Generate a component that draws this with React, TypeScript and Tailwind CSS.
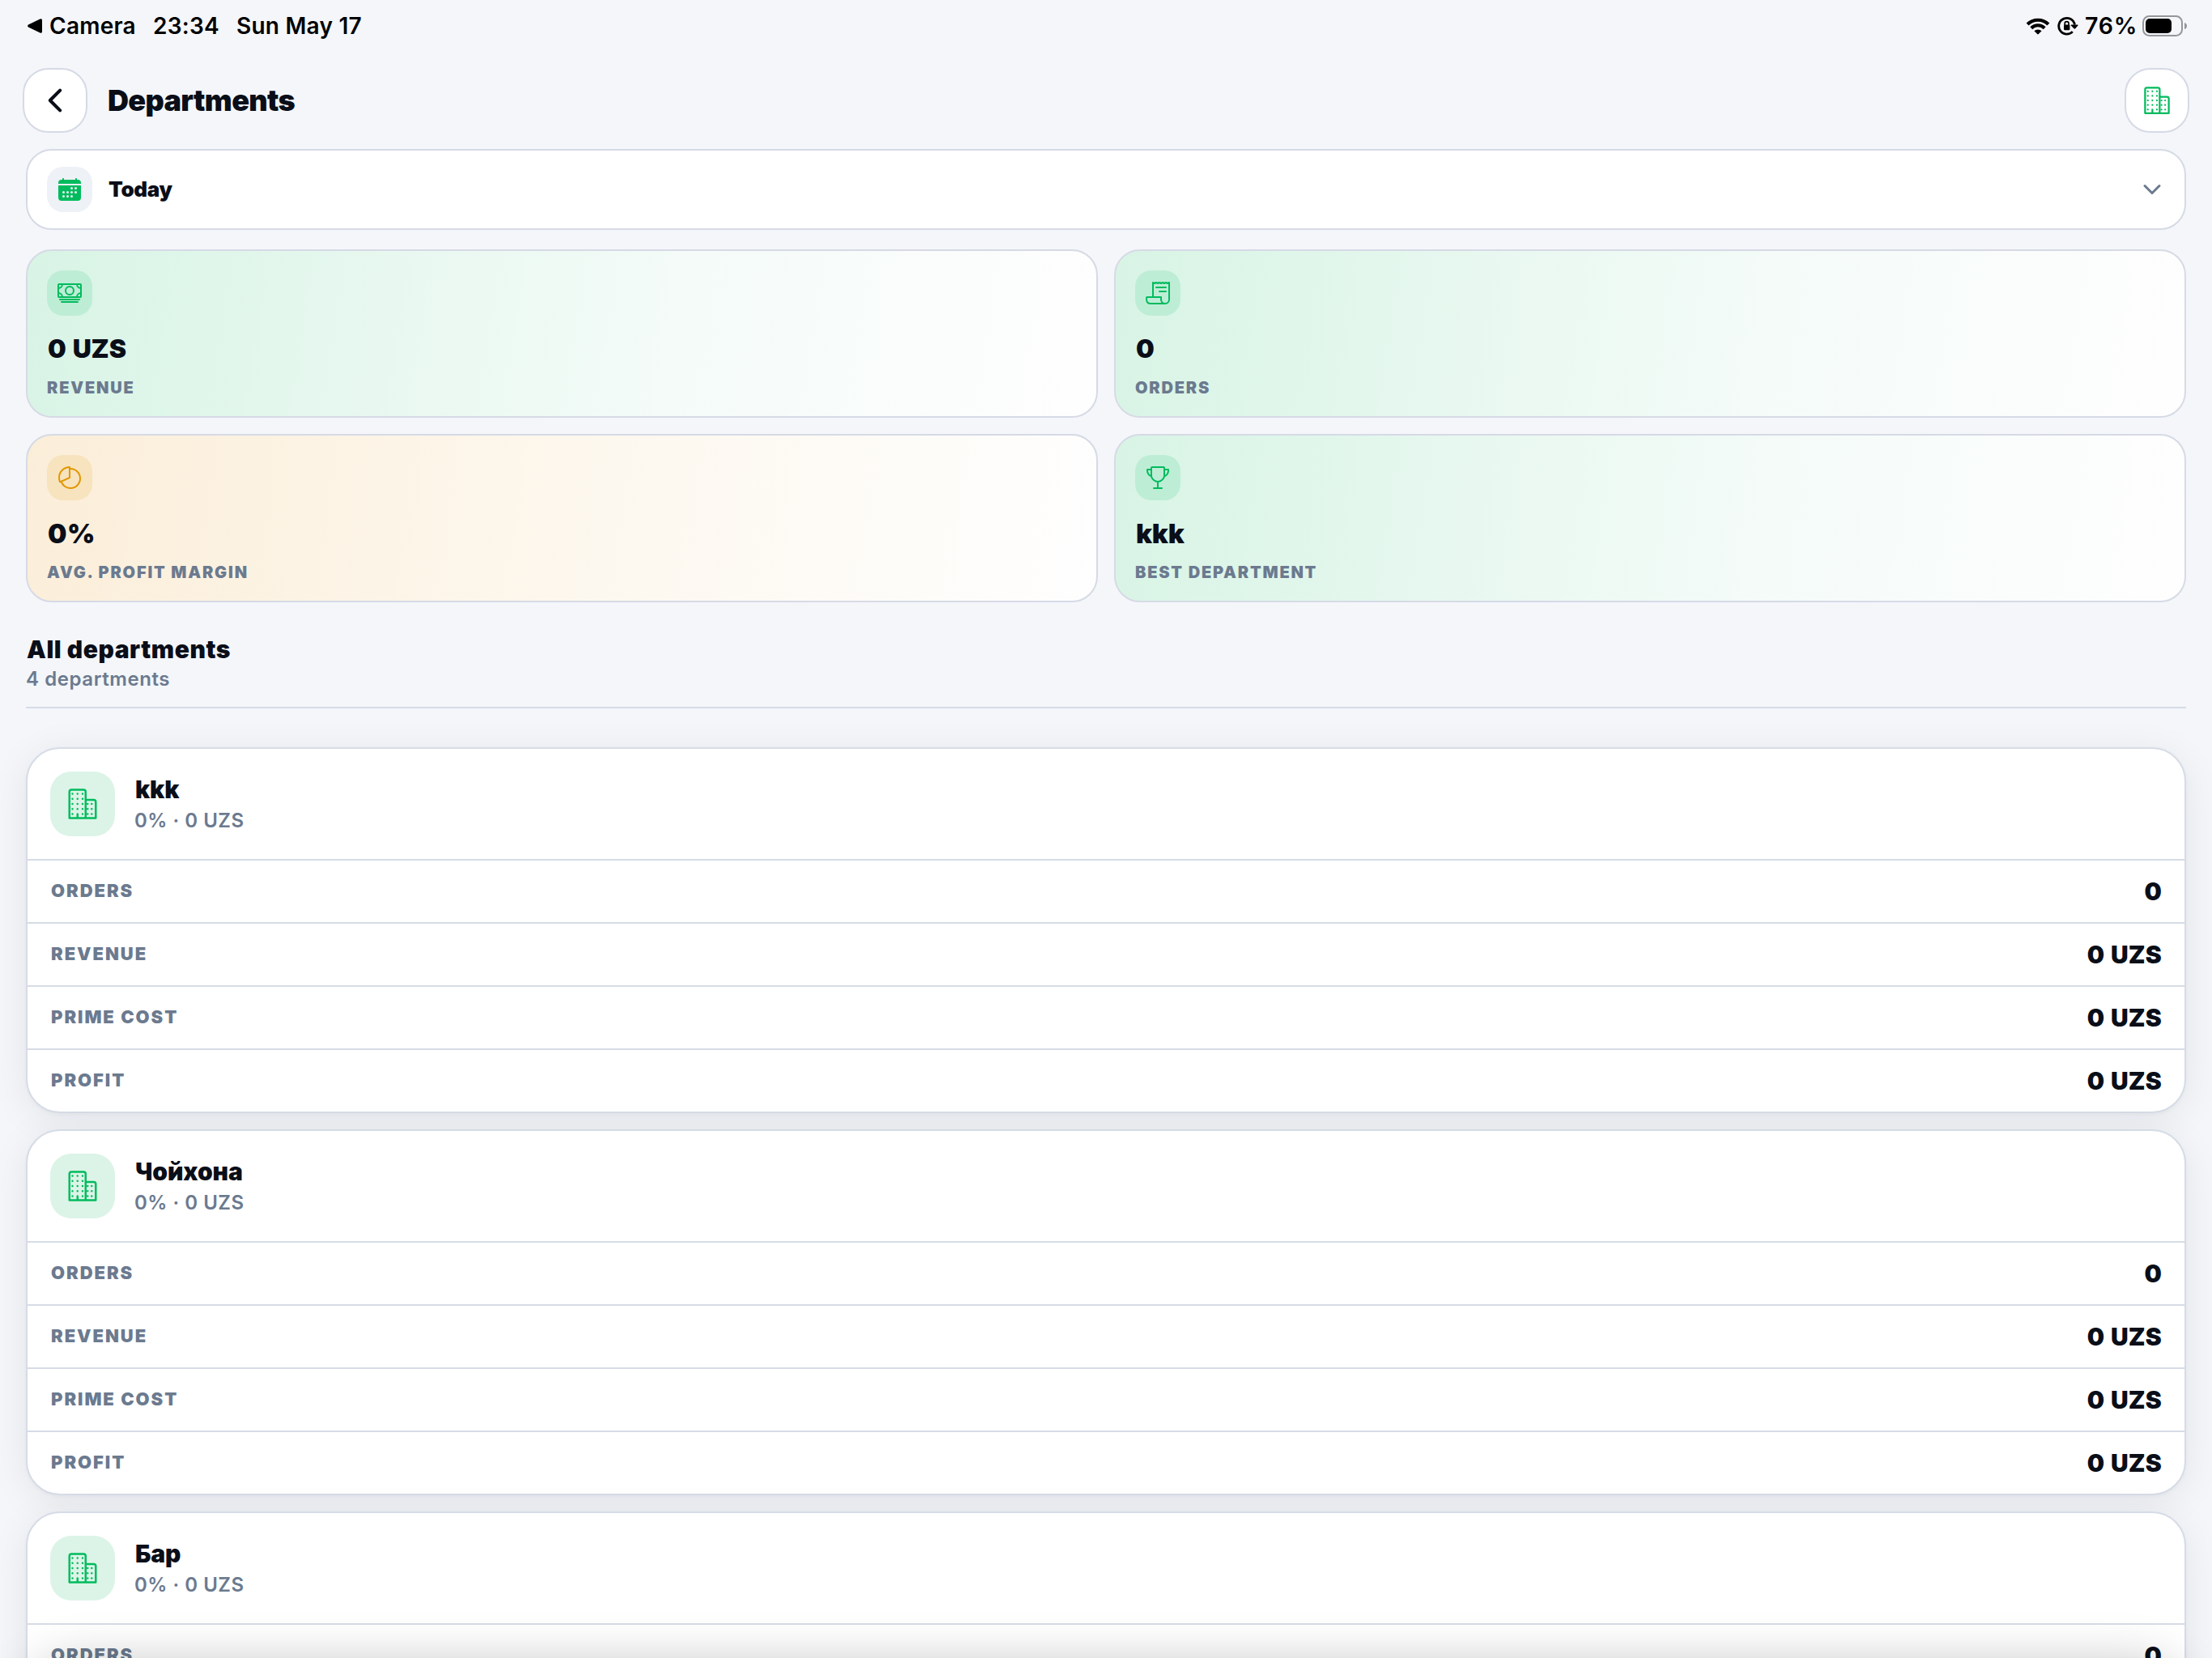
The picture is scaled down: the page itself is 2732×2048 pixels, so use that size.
import React from "react";
import type { IconType } from "react-icons";
import {
  IoBusinessOutline,
  IoCalendar,
  IoCashOutline,
  IoChevronBack,
  IoChevronDown,
  IoPieChartOutline,
  IoReceiptOutline,
  IoTrophyOutline,
} from "react-icons/io5";

type Stat = { icon: IconType; value: string; label: string; tone: "green" | "amber"; spacing: string };

const STATS: Stat[] = [
  { icon: IoCashOutline, value: "0 UZS", label: "REVENUE", tone: "green", spacing: "text-[32px] tracking-[-0.2px] [word-spacing:2px]" },
  { icon: IoReceiptOutline, value: "0", label: "ORDERS", tone: "green", spacing: "text-[32px]" },
  { icon: IoPieChartOutline, value: "0%", label: "AVG. PROFIT MARGIN", tone: "amber", spacing: "text-[33px] tracking-[0.5px]" },
  { icon: IoTrophyOutline, value: "kkk", label: "BEST DEPARTMENT", tone: "green", spacing: "text-[33px] tracking-[-0.2px]" },
];

const DEPARTMENTS = ["kkk", "Чойхона", "Бар"];

const METRICS = [
  { label: "ORDERS", value: "0" },
  { label: "REVENUE", value: "0 UZS" },
  { label: "PRIME COST", value: "0 UZS" },
  { label: "PROFIT", value: "0 UZS" },
];

function StatusBar() {
  return (
    <div className="flex h-16 items-center justify-between pl-[34px] pr-[30px] text-[28px] leading-none font-semibold tracking-[0.25px] text-black">
      <div className="flex items-center">
        <svg width="18" height="18" viewBox="0 0 18 18" className="mr-[9px]">
          <path d="M1 7.6 15.4.5Q18-.6 18 2v14q0 2.600-2.600 1.500L1 10.400Q-.8 9 1 7.600Z" fill="black" />
        </svg>
        <span className="w-[128px]">Camera</span>
        <span className="w-[103px]">23:34</span>
        <span>Sun May 17</span>
      </div>
      <div className="flex items-center">
        <svg width="30" height="21" viewBox="0 0 30 21" fill="none" stroke="black" className="mr-[9px]">
          <path d="M2.100 8.100A18.200 18.200 0 0 1 27.900 8.100" strokeWidth="4.200" />
          <path d="M6.800 12.700A11.600 11.600 0 0 1 23.200 12.700" strokeWidth="4.100" />
          <path d="M10.400 16.300A6.500 6.500 0 0 1 19.600 16.300L15.800 20.100Q15 20.800 14.200 20.100Z" fill="black" stroke="none" />
        </svg>
        <svg width="26" height="24" viewBox="0 0 26 24" fill="none" stroke="black" className="mr-[8px]">
          <path d="M21.400 10.500A9.900 9.900 0 1 0 18.800 19.100" strokeWidth="2.800" />
          <path d="M17.200 10.400h7.800q.9.300.4 1.100l-3.200 3.800q-.9.700-1.700 0l-3.700-3.800q-.5-.8.400-1.100Z" fill="black" stroke="none" />
          <path d="M9.200 11V9a2.400 2.400 0 0 1 4.800 0v2" strokeWidth="1.700" />
          <rect x="8" y="10.500" width="7.400" height="6.800" rx="1.200" fill="black" stroke="none" />
        </svg>
        <span className="w-[71px] text-[28.500px] tracking-[0.8px]">76%</span>
        <svg width="56" height="26" viewBox="0 0 56 26">
          <rect x="1" y="1" width="48" height="24" rx="7.500" fill="none" stroke="#94969a" strokeWidth="2" />
          <rect x="4" y="4" width="32" height="18" rx="5" fill="black" />
          <path d="M52 9q3 1 3 4t-3 4Z" fill="#94969a" />
        </svg>
      </div>
    </div>
  );
}

function StatCard({ stat }: { stat: Stat }) {
  const Icon = stat.icon;
  const green = stat.tone === "green";
  return (
    <div
      className={
        "h-[208px] rounded-[32px] border-2 border-[#d6dae5] px-6 pt-6 " +
        (green
          ? "bg-[linear-gradient(99deg,#d8f4e5,#f4fbf8_60%,#fefefe)]"
          : "bg-[linear-gradient(99deg,#fbeed9,#fdf9f1_60%,#fefefe)]")
      }
    >
      <div
        className={
          "flex size-14 items-center justify-center rounded-[20px] " +
          (green ? "bg-[#beedd6] text-[#00bb5d]" : "bg-[#f7e3be] text-[#e29700]")
        }
      >
        <Icon size={32} />
      </div>
      <div className={"mt-[21px] pl-px leading-[40px] font-black text-[#0a0e18] " + stat.spacing}>{stat.value}</div>
      <div className="mt-4 text-[20px] leading-[24px] font-black tracking-[1.8px] text-[#6b7a8f]">
        {stat.label}
      </div>
    </div>
  );
}

function DepartmentCard({ name }: { name: string }) {
  return (
    <section className="overflow-hidden rounded-[42px] border-2 border-[#d6dce6] bg-white shadow-[0_8px_48px_rgba(10,15,30,0.075),0_2px_5px_rgba(10,15,30,0.03)]">
      <div className="flex h-[136px] items-center gap-6 px-7">
        <div className="flex size-20 items-center justify-center rounded-[26px] bg-[#dcf4e7] text-[#00bb5d]">
          <IoBusinessOutline size={40} />
        </div>
        <div className="pt-[2px]">
          <div className="pl-px text-[30px] leading-[38px] font-black tracking-[-0.1px] text-[#0a0e18]">{name}</div>
          <div className="text-[24px] leading-[39px] font-semibold tracking-[0.51px] text-[#6b7a8f]">0% · 0 UZS</div>
        </div>
      </div>
      {METRICS.map((m) => (
        <div key={m.label} className="flex h-[78px] items-center justify-between border-t-2 border-[#d6dce6] px-7">
          <span className="pb-[2px] pl-px text-[22px] leading-none font-black tracking-[1.95px] text-[#6b7a8f]">{m.label}</span>
          <span className="text-[30px] leading-none font-black tracking-[0.2px] text-[#0a0e18] [word-spacing:1.500px]">{m.value}</span>
        </div>
      ))}
    </section>
  );
}

export default function App() {
  return (
    <div className="relative h-[2048px] w-[2732px] overflow-hidden bg-[#f4f6fa] font-['Inter',sans-serif]">
      <StatusBar />

      <header className="mt-5 flex items-center px-7">
        <button className="flex size-20 items-center justify-center rounded-[32px] border-2 border-[#d6dae5] bg-white text-[#0a0e18]">
          <IoChevronBack size={44} />
        </button>
        <h1 className="ml-[25px] flex-1 text-[36px] leading-[40px] font-black tracking-[-0.65px] text-[#0a0e18]">
          Departments
        </h1>
        <button className="flex size-20 items-center justify-center rounded-[32px] border-2 border-[#d6dae5] bg-white text-[#00bb5d]">
          <IoBusinessOutline size={36} />
        </button>
      </header>

      <main className="px-8 pt-5">
        <div className="flex h-[100px] items-center rounded-[32px] border-2 border-[#d6dae5] bg-white px-6">
          <div className="flex size-14 items-center justify-center rounded-[20px] bg-[#eef1f6] text-[#00bb5d]">
            <IoCalendar size={32} />
          </div>
          <span className="ml-5 flex-1 text-[26px] leading-none font-black tracking-[-0.35px] text-[#0a0e18]">Today</span>
          <IoChevronDown size={32} className="text-[#6b7a8f]" />
        </div>

        <div className="mt-6 grid grid-cols-2 gap-5">
          {STATS.map((s) => (
            <StatCard key={s.label} stat={s} />
          ))}
        </div>

        <div className="mt-10 h-[91px] border-b-2 border-[#d6dce6]">
          <h2 className="pl-px text-[30px] leading-[36px] font-black tracking-[0.55px] text-[#0a0e18]">All departments</h2>
          <p className="mt-[3px] text-[24px] leading-[32px] font-semibold tracking-[0.58px] text-[#6b7a8f]">4 departments</p>
        </div>

        <div className="mt-12 flex flex-col gap-5">
          {DEPARTMENTS.map((name) => (
            <DepartmentCard key={name} name={name} />
          ))}
        </div>
      </main>

      <div className="pointer-events-none absolute top-[2052px] right-8 left-8 h-32 rounded-[60px] shadow-[0_0_60px_rgba(0,0,0,0.22)]" />
    </div>
  );
}
